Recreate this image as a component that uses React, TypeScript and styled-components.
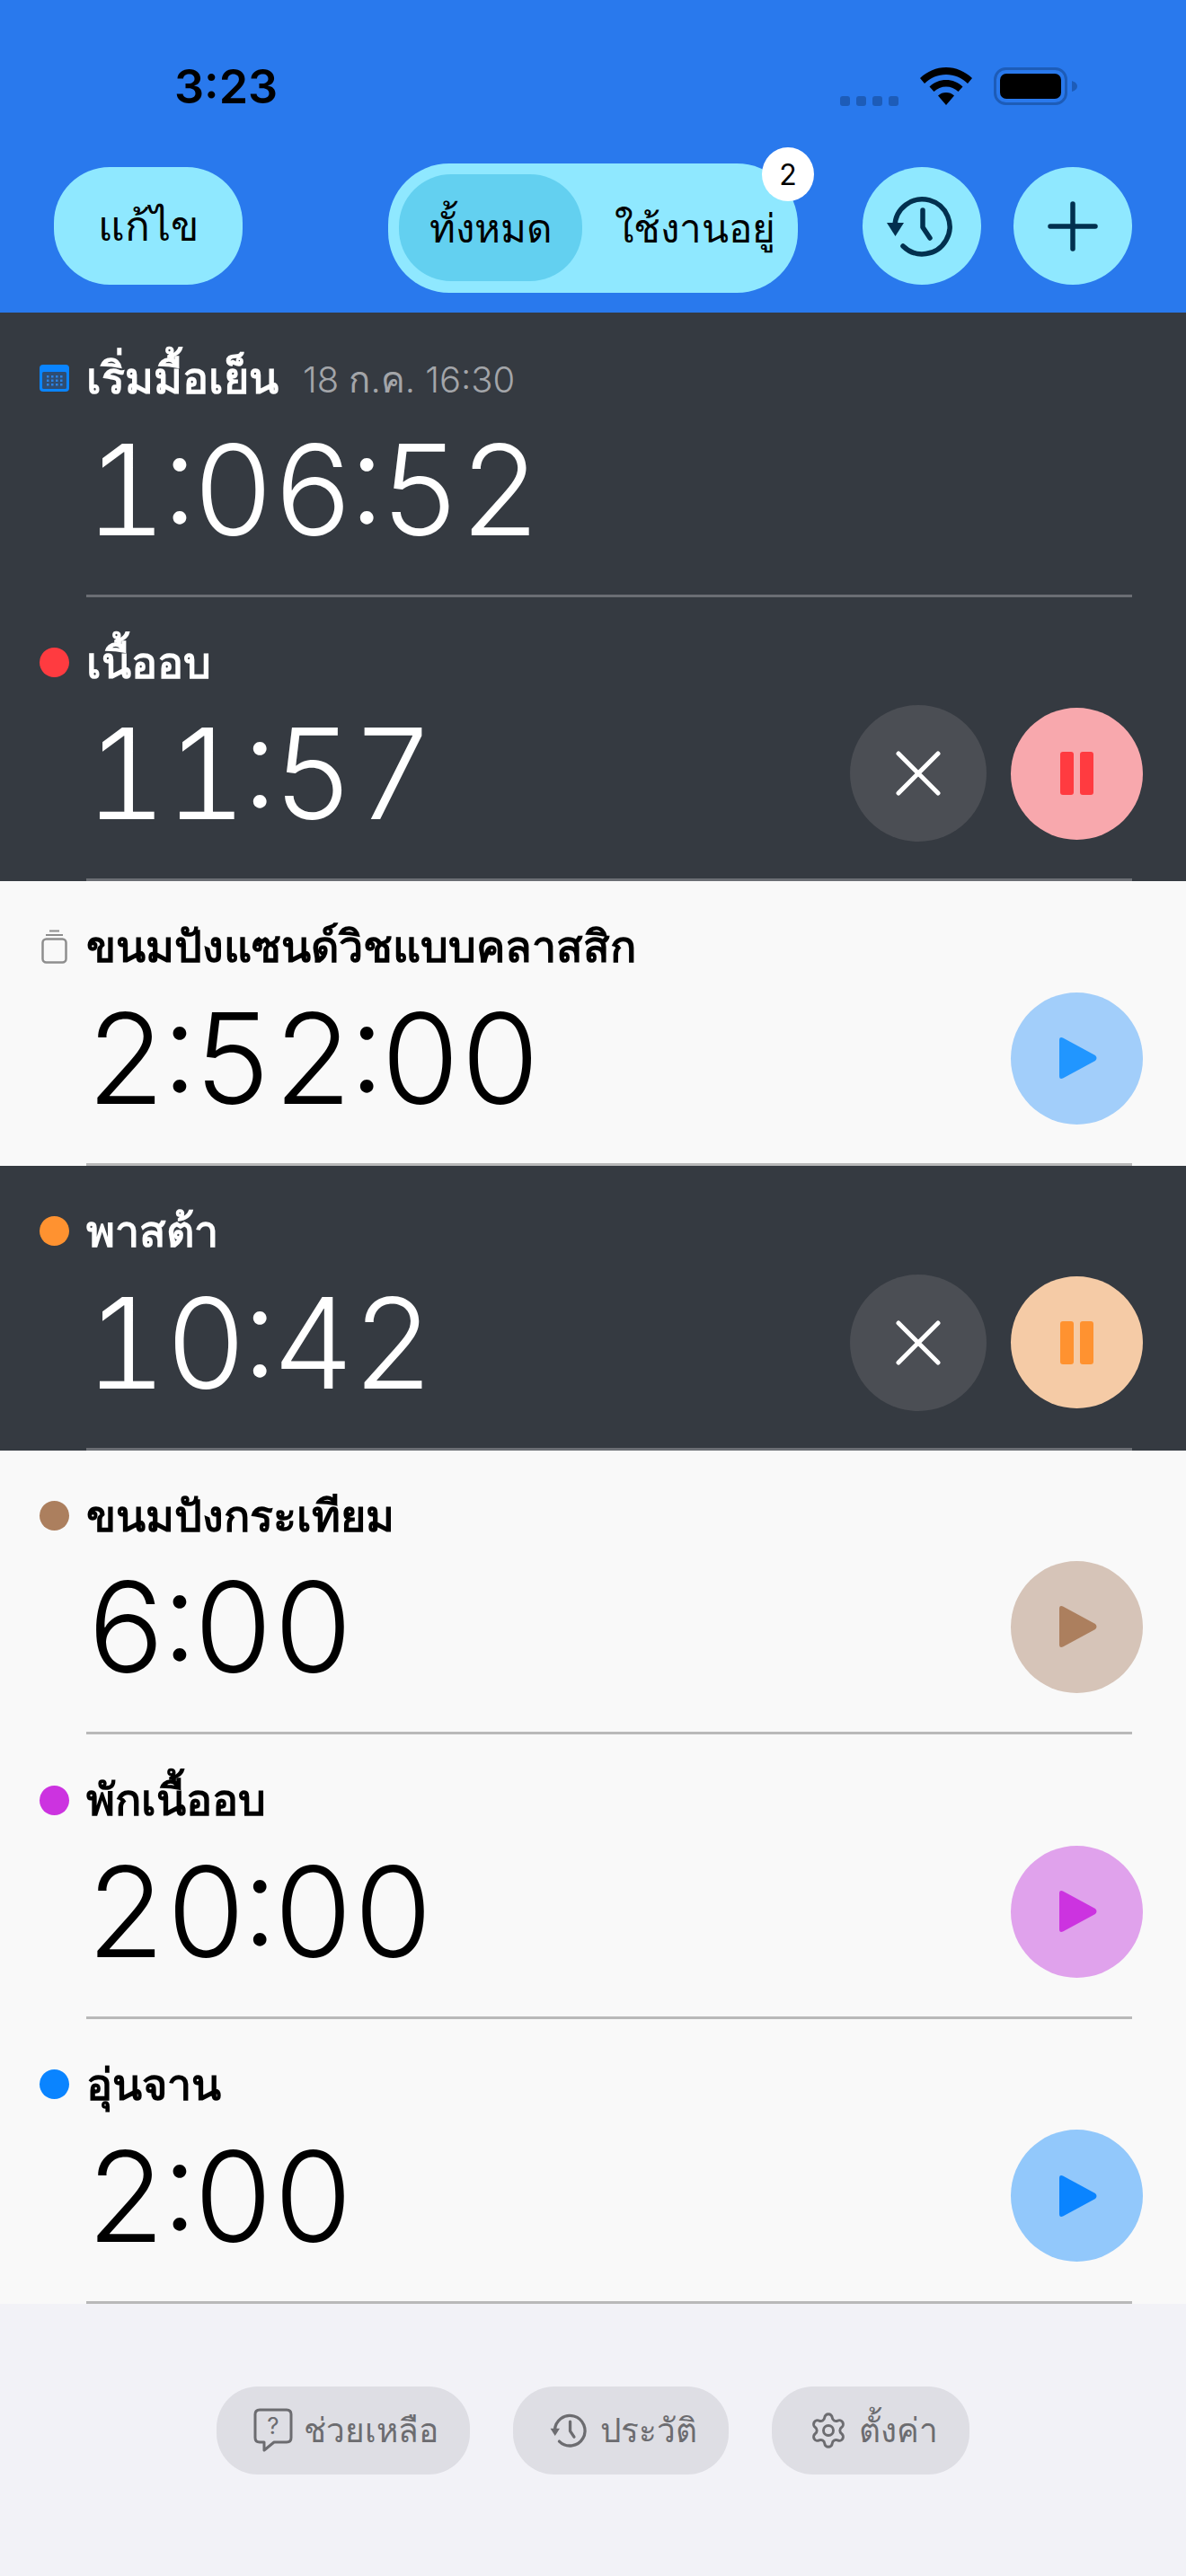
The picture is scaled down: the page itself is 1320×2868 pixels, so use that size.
import { Fragment } from "react";
import styled, { createGlobalStyle } from "styled-components";
import { Settings } from "lucide-react";

const GlobalStyle = createGlobalStyle`
  html, body {
    margin: 0;
    padding: 0;
    background: #f2f2f7;
  }
  body {
    font-family: Inter, "Noto Sans", "Liberation Sans", sans-serif;
  }
`;

const Page = styled.div`
  width: 1320px;
  height: 2868px;
  display: flex;
  flex-direction: column;
  overflow: hidden;
  background: #f2f2f7;
`;

const Header = styled.header`
  height: 348px;
  flex-shrink: 0;
  background: #2979ed;
`;

const StatusBar = styled.div`
  height: 182px;
  box-sizing: border-box;
  padding: 0 0 0 194px;
  display: flex;
  align-items: flex-start;
`;

const Clock = styled.div`
  margin-top: 65px;
  font-size: 52px;
  line-height: 64px;
  font-weight: 600;
  color: #000;
`;

const StatusIcons = styled.div`
  margin-left: auto;
  margin-right: 121px;
  margin-top: 75px;
  display: flex;
  align-items: flex-start;
  gap: 24px;
`;

const SignalDots = styled.div`
  display: flex;
  gap: 7px;
  margin-top: 32px;
`;

const SignalDot = styled.span`
  width: 11px;
  height: 11px;
  border-radius: 3px;
  background: #1d5cb8;
`;

const Toolbar = styled.div`
  display: grid;
  grid-template-columns: 1fr auto 1fr;
  padding: 0 60px;
  align-items: start;
`;

const EditButton = styled.button`
  justify-self: start;
  width: 210px;
  height: 131px;
  margin-top: 4px;
  border: none;
  border-radius: 62px;
  background: #8fe8ff;
  color: #000;
  font: 500 46px Inter, "Noto Sans", sans-serif;
`;

const Segments = styled.div`
  position: relative;
  width: 456px;
  height: 144px;
  box-sizing: border-box;
  padding: 12px;
  display: flex;
  align-items: stretch;
  border-radius: 68px;
  background: #8fe8ff;
`;

const Segment = styled.div<{ $active?: boolean }>`
  width: ${(p) => (p.$active ? "204px" : "auto")};
  flex: ${(p) => (p.$active ? "none" : "1")};
  height: 119px;
  padding-left: ${(p) => (p.$active ? "0" : "22px")};
  display: flex;
  align-items: center;
  justify-content: center;
  border-radius: 58px;
  background: ${(p) => (p.$active ? "#63d0f0" : "transparent")};
  font-size: 44px;
  font-weight: 500;
  color: #000;
  white-space: nowrap;
`;

const Badge = styled.span`
  position: absolute;
  top: -18px;
  right: -18px;
  width: 58px;
  height: 60px;
  display: flex;
  align-items: center;
  justify-content: center;
  border-radius: 50%;
  background: #fff;
  font-size: 32px;
  color: #000;
`;

const ToolbarRight = styled.div`
  justify-self: end;
  margin-top: 4px;
  display: flex;
  gap: 36px;
`;

const RoundButton = styled.button`
  width: 132px;
  height: 131px;
  padding: 0;
  border: none;
  border-radius: 50%;
  background: #8fe8ff;
  display: flex;
  align-items: center;
  justify-content: center;
`;

const List = styled.main`
  flex-shrink: 0;
`;

const Row = styled.section<{ $dark?: boolean }>`
  height: 316.67px;
  box-sizing: border-box;
  padding: 0 60px 0 96px;
  background: ${(p) => (p.$dark ? "#353a41" : "#f9f9f9")};
  color: ${(p) => (p.$dark ? "#fff" : "#000")};
`;

const RowBody = styled.div<{ $dark?: boolean }>`
  height: 100%;
  box-sizing: border-box;
  padding-top: 43px;
  border-bottom: 3px solid ${(p) => (p.$dark ? "#6b6e74" : "#b9b9b9")};
  display: flex;
  flex-direction: column;
`;

const TitleLine = styled.div`
  margin-left: -52px;
  height: 60px;
  display: flex;
  align-items: center;
  gap: 19px;
`;

const Dot = styled.span<{ $color: string }>`
  width: 33px;
  height: 33px;
  flex-shrink: 0;
  border-radius: 50%;
  background: ${(p) => p.$color};
`;

const Title = styled.span`
  font-size: 48.5px;
  font-weight: 700;
  line-height: 60px;
  white-space: nowrap;
`;

const DateText = styled.span`
  margin: 3px 0 0 8px;
  font-size: 40px;
  font-weight: 300;
  color: #a3a5a9;
`;

const TimeLine = styled.div`
  flex: 1;
  display: flex;
  align-items: center;
  justify-content: space-between;
  margin-right: -12px;
  padding-bottom: 23px;
`;

const TimeText = styled.div`
  margin-left: -1px;
  font-size: 140px;
  font-weight: 300;
  line-height: 150px;
  letter-spacing: -1.5px;
  font-feature-settings: "tnum" 1, "case" 1;
`;

const Colon = styled.span`
  margin: 0 -3px;
`;

const Actions = styled.div`
  display: flex;
  align-items: center;
  gap: 27px;
`;

const CancelButton = styled.button`
  width: 152px;
  height: 152px;
  padding: 0;
  border: none;
  border-radius: 50%;
  background: #4b4e54;
  display: flex;
  align-items: center;
  justify-content: center;
`;

const ActionButton = styled.button<{ $bg: string }>`
  width: 147px;
  height: 147px;
  padding: 0;
  border: none;
  border-radius: 50%;
  background: ${(p) => p.$bg};
  display: flex;
  align-items: center;
  justify-content: center;
`;

const PauseIcon = styled.span`
  display: flex;
  gap: 7px;
`;

const PauseBar = styled.span<{ $color: string }>`
  width: 15px;
  height: 48px;
  border-radius: 3px;
  background: ${(p) => p.$color};
`;

const Footer = styled.footer`
  flex: 1;
  display: flex;
  justify-content: center;
  gap: 48px;
  padding-top: 92px;
`;

const FooterPill = styled.button`
  height: 98px;
  padding: 0 35px 0 41px;
  border: none;
  border-radius: 46px;
  background: #dedee4;
  color: #6c6c70;
  display: flex;
  align-items: center;
  gap: 12px;
  font: 400 37px Inter, "Noto Sans", sans-serif;
`;

function HistoryIcon({ size, color, width }: { size: number; color: string; width: number }) {
  return (
    <svg width={size} height={size} viewBox="0 0 80 80" fill="none">
      <path
        d="M10 40 A30.5 30.5 0 1 1 19 62"
        stroke={color}
        strokeWidth={width}
        strokeLinecap="round"
      />
      <path d="M1 36 H20 L10.5 51 Z" fill={color} />
      <path
        d="M41 22 V41 L49 53"
        stroke={color}
        strokeWidth={width}
        strokeLinecap="round"
        strokeLinejoin="round"
      />
    </svg>
  );
}

function PlusIcon() {
  return (
    <svg width="56" height="56" viewBox="0 0 56 56" fill="none">
      <path d="M28 3 V53 M3 28 H53" stroke="#02304f" strokeWidth="5.5" strokeLinecap="round" />
    </svg>
  );
}

function CloseIcon() {
  return (
    <svg width="50" height="50" viewBox="0 0 50 50" fill="none">
      <path d="M3 3 L47 47 M47 3 L3 47" stroke="#fff" strokeWidth="5" strokeLinecap="round" />
    </svg>
  );
}

function PlayIcon({ color }: { color: string }) {
  return (
    <svg width="46" height="50" viewBox="0 0 46 50">
      <path
        d="M3 5 Q3 1 7 2.500 L43 22 Q46 25 43 28 L7 47.500 Q3 49 3 45 Z"
        fill={color}
      />
    </svg>
  );
}

function CalendarIcon() {
  return (
    <svg width="33" height="30" viewBox="0 0 33 30">
      <rect width="33" height="30" rx="4" fill="#0a84ff" />
      <rect x="3" y="8" width="27" height="19" rx="1.500" fill="#2f4d72" />
      {[0, 1, 2, 3].map((c) =>
        [0, 1, 2].map((r) => (
          <rect key={`${c}-${r}`} x={8 + c * 5} y={12 + r * 4.500} width="2.500" height="2.500" fill="#2b83e6" />
        ))
      )}
    </svg>
  );
}

function StackIcon() {
  return (
    <svg width="33" height="38" viewBox="0 0 33 38" fill="none">
      <path d="M11 1.500 H22" stroke="#8e8e8e" strokeWidth="2" />
      <path d="M7 6 H26" stroke="#8e8e8e" strokeWidth="2" />
      <rect x="3.500" y="10.500" width="26" height="26" rx="4" stroke="#8e8e8e" strokeWidth="2.500" />
    </svg>
  );
}

function HelpIcon() {
  return (
    <svg width="44" height="50" viewBox="0 0 44 50" fill="none">
      <path
        d="M7 2 H37 Q42 2 42 7 V33 Q42 38 37 38 H23 L12 47 V38 H7 Q2 38 2 33 V7 Q2 2 7 2 Z"
        stroke="#6c6c70"
        strokeWidth="3"
        strokeLinejoin="round"
      />
      <text x="22" y="29" textAnchor="middle" fontSize="26" fill="#6c6c70" fontFamily="Inter, sans-serif">
        ?
      </text>
    </svg>
  );
}

function WifiIcon() {
  return (
    <svg width="58" height="42" viewBox="0 0 58 42">
      <path
        d="M29 0 C40 0 50 4.500 58 12 L53 18 C46.500 11.500 38 8 29 8 C20 8 11.500 11.500 5 18 L0 12 C8 4.500 18 0 29 0 Z"
        fill="#000"
      />
      <path
        d="M29 14 C36 14 42.500 16.500 47.500 21.500 L42.500 27 C39 23.500 34 21.500 29 21.500 C24 21.500 19 23.500 15.500 27 L10.500 21.500 C15.500 16.500 22 14 29 14 Z"
        fill="#000"
      />
      <path d="M29 28 C32.500 28 35.500 29 38 31.500 L29 42 L20 31.500 C22.500 29 25.500 28 29 28 Z" fill="#000" />
    </svg>
  );
}

function BatteryIcon() {
  return (
    <svg width="93" height="42" viewBox="0 0 93 42">
      <rect x="1.500" y="1.500" width="79" height="39" rx="12" fill="none" stroke="#1d5cb8" strokeWidth="3" />
      <rect x="7" y="7" width="68" height="28" rx="7" fill="#000" />
      <path d="M87 15 Q93 17 93 21 Q93 25 87 27 Z" fill="#1d5cb8" />
    </svg>
  );
}

type Timer = {
  name: string;
  time: string;
  dark?: boolean;
  color: string;
  tint?: string;
  state?: "running" | "idle";
  date?: string;
  icon?: "calendar" | "stack";
};

const timers: Timer[] = [
  { name: "เริ่มมื้อเย็น", time: "1:06:52", dark: true, color: "#0a84ff", date: "18 ก.ค. 16:30", icon: "calendar" },
  { name: "เนื้ออบ", time: "11:57", dark: true, color: "#ff3b40", tint: "#f8a8ad", state: "running" },
  { name: "ขนมปังแซนด์วิชแบบคลาสสิก", time: "2:52:00", color: "#2196ff", tint: "#a2cefa", state: "idle", icon: "stack" },
  { name: "พาสต้า", time: "10:42", dark: true, color: "#ff9230", tint: "#f5cba6", state: "running" },
  { name: "ขนมปังกระเทียม", time: "6:00", color: "#ac7f5e", tint: "#d6c4b8", state: "idle" },
  { name: "พักเนื้ออบ", time: "20:00", color: "#cc33e0", tint: "#e0a2ec", state: "idle" },
  { name: "อุ่นจาน", time: "2:00", color: "#0a84ff", tint: "#92c8fb", state: "idle" },
];

function Time({ value }: { value: string }) {
  return (
    <TimeText>
      {value.split(":").map((part, i) => (
        <Fragment key={i}>
          {i > 0 && <Colon>:</Colon>}
          {part}
        </Fragment>
      ))}
    </TimeText>
  );
}

export default function App() {
  return (
    <Page>
      <GlobalStyle />
      <Header>
        <StatusBar>
          <Clock>3:23</Clock>
          <StatusIcons>
            <SignalDots>
              <SignalDot />
              <SignalDot />
              <SignalDot />
              <SignalDot />
            </SignalDots>
            <WifiIcon />
            <BatteryIcon />
          </StatusIcons>
        </StatusBar>
        <Toolbar>
          <EditButton>แก้ไข</EditButton>
          <Segments>
            <Segment $active>ทั้งหมด</Segment>
            <Segment>ใช้งานอยู่</Segment>
            <Badge>2</Badge>
          </Segments>
          <ToolbarRight>
            <RoundButton>
              <HistoryIcon size={80} color="#02304f" width={5.5} />
            </RoundButton>
            <RoundButton>
              <PlusIcon />
            </RoundButton>
          </ToolbarRight>
        </Toolbar>
      </Header>

      <List>
        {timers.map((t) => (
          <Row key={t.name} $dark={t.dark}>
            <RowBody $dark={t.dark}>
              <TitleLine>
                {t.icon === "calendar" ? <CalendarIcon /> : t.icon === "stack" ? <StackIcon /> : <Dot $color={t.color} />}
                <Title>{t.name}</Title>
                {t.date && <DateText>{t.date}</DateText>}
              </TitleLine>
              <TimeLine>
                <Time value={t.time} />
                {t.state && (
                  <Actions>
                    {t.state === "running" && (
                      <CancelButton>
                        <CloseIcon />
                      </CancelButton>
                    )}
                    <ActionButton $bg={t.tint ?? "#fff"}>
                      {t.state === "running" ? (
                        <PauseIcon>
                          <PauseBar $color={t.color} />
                          <PauseBar $color={t.color} />
                        </PauseIcon>
                      ) : (
                        <PlayIcon color={t.color} />
                      )}
                    </ActionButton>
                  </Actions>
                )}
              </TimeLine>
            </RowBody>
          </Row>
        ))}
      </List>

      <Footer>
        <FooterPill>
          <HelpIcon />
          ช่วยเหลือ
        </FooterPill>
        <FooterPill>
          <HistoryIcon size={44} color="#6c6c70" width={6} />
          ประวัติ
        </FooterPill>
        <FooterPill>
          <Settings size={44} strokeWidth={1.6} />
          ตั้งค่า
        </FooterPill>
      </Footer>
    </Page>
  );
}
